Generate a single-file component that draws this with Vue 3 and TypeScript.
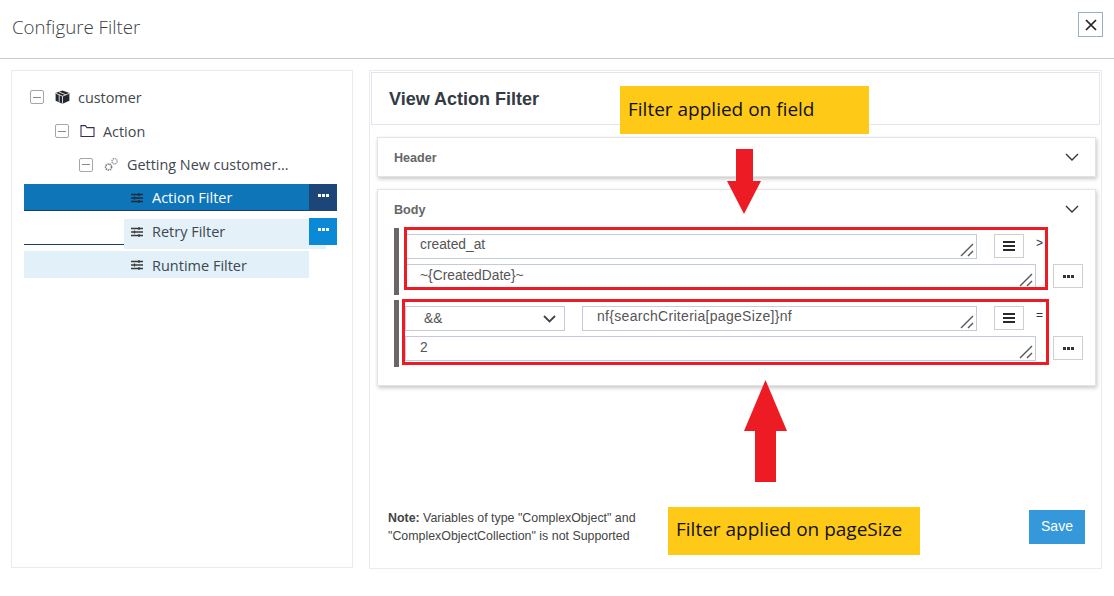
<template>
  <div class="modal">
    <header class="modal-head">
      <h1>Configure Filter</h1>
      <button class="close" type="button">
        <svg width="12" height="12" viewBox="0 0 12 12"><path d="M1 1l10 10M11 1 1 11" stroke="#222" stroke-width="1.7" fill="none" /></svg>
      </button>
    </header>

    <div class="modal-body">
      <aside class="tree">
        <div v-for="node in nodes" :key="node.label" class="tree-row" :class="`lvl-${node.level}`">
          <span class="toggle"><i /></span>
          <svg v-if="node.icon === 'cube'" class="ico" width="15" height="14" viewBox="0 0 15 14">
            <path d="M7.5.4 14.4 3v7.8l-6.9 3-6.9-3V3z" fill="#23282e" />
            <path d="M1 3.4 7.5 6.2 14 3.4M7.5 6.2v7.4M4.2 2l6.6 2.8M4.2 4.8v7" stroke="#fff" stroke-width=".8" fill="none" />
          </svg>
          <svg v-else-if="node.icon === 'folder'" class="ico" width="15" height="14" viewBox="0 0 15 14">
            <path d="M1 12.5V1.6h4.4l1.6 2h7v8.9z" fill="none" stroke="#3b2a5c" stroke-width="1.1" />
          </svg>
          <svg v-else class="ico" width="15" height="15" viewBox="0 0 15 15">
            <circle cx="4.6" cy="10" r="3" fill="none" stroke="#777" stroke-width="1.6" stroke-dasharray="1.4 .7" />
            <circle cx="10.6" cy="4.2" r="2.6" fill="none" stroke="#999" stroke-width="1.5" stroke-dasharray="1.3 .7" />
          </svg>
          <span>{{ node.label }}</span>
        </div>

        <div class="filter-row active">
          <div class="filter-label">
            <svg class="sliders" width="12" height="10" viewBox="0 0 12 10"><path d="M0 1.5h12M0 5h12M0 8.5h12M8 0v3M3.5 3.5v3M8 7v3" stroke="#1d2a38" stroke-width="1.3" fill="none" /></svg>
            Action Filter
          </div>
          <button class="more" type="button">
            <svg width="11" height="3" viewBox="0 0 11 3"><path d="M0 0h3v3H0zM4 0h3v3H4zM8 0h3v3H8z" fill="currentColor" /></svg>
          </button>
        </div>
        <div class="filter-row retry">
          <div class="filter-label">
            <span class="retry-bg" />
            <svg class="sliders" width="12" height="10" viewBox="0 0 12 10"><path d="M0 1.5h12M0 5h12M0 8.5h12M8 0v3M3.5 3.5v3M8 7v3" stroke="#3a3a3a" stroke-width="1.3" fill="none" /></svg>
            <span class="retry-text">Retry Filter</span>
          </div>
          <button class="more" type="button">
            <svg width="11" height="3" viewBox="0 0 11 3"><path d="M0 0h3v3H0zM4 0h3v3H4zM8 0h3v3H8z" fill="currentColor" /></svg>
          </button>
        </div>
        <div class="filter-row runtime">
          <div class="filter-label">
            <svg class="sliders" width="12" height="10" viewBox="0 0 12 10"><path d="M0 1.5h12M0 5h12M0 8.5h12M8 0v3M3.5 3.5v3M8 7v3" stroke="#3a3a3a" stroke-width="1.3" fill="none" /></svg>
            Runtime Filter
          </div>
        </div>
      </aside>

      <section class="detail">
        <h2>View Action Filter</h2>

        <div class="card card-head">
          <span class="card-title">Header</span>
          <svg class="chev" width="14" height="8" viewBox="0 0 14 8"><path d="M1 1l6 6 6-6" stroke="#333" stroke-width="1.4" fill="none" /></svg>
        </div>

        <div class="card card-body">
          <div class="card-line">
            <span class="card-title">Body</span>
            <svg class="chev" width="14" height="8" viewBox="0 0 14 8"><path d="M1 1l6 6 6-6" stroke="#333" stroke-width="1.4" fill="none" /></svg>
          </div>

          <div v-for="rule in rules" :key="rule.field" class="rule">
            <div class="rule-top">
              <div v-if="rule.joiner" class="select">
                {{ rule.joiner }}
                <svg width="13" height="8" viewBox="0 0 13 8"><path d="M1 1l5.5 5.5L12 1" stroke="#444" stroke-width="1.8" fill="none" /></svg>
              </div>
              <div class="field" :class="rule.joiner ? 'field-short' : 'field-full'">
                {{ rule.field }}
                <svg class="grip" width="14" height="14" viewBox="0 0 14 14"><path d="M1 13 13 1M8 13l5-5" stroke="#555" stroke-width="1.4" fill="none" /></svg>
              </div>
              <button class="square" type="button">
                <svg width="12" height="10" viewBox="0 0 12 10"><path d="M0 1h12M0 5h12M0 9h12" stroke="#2a2a2a" stroke-width="2" fill="none" /></svg>
              </button>
              <span class="op">{{ rule.op }}</span>
            </div>
            <div class="rule-bottom">
              <div class="field field-value">
                {{ rule.value }}
                <svg class="grip" width="14" height="14" viewBox="0 0 14 14"><path d="M1 13 13 1M8 13l5-5" stroke="#555" stroke-width="1.4" fill="none" /></svg>
              </div>
              <button class="square" type="button">
                <svg width="11" height="3" viewBox="0 0 11 3"><path d="M0 0h3v3H0zM4 0h3v3H4zM8 0h3v3H8z" fill="#333" /></svg>
              </button>
            </div>
          </div>
        </div>

        <footer class="detail-foot">
          <p><b>Note:</b> Variables of type "ComplexObject" and<br />"ComplexObjectCollection" is not Supported</p>
          <button class="save" type="button">Save</button>
        </footer>
      </section>
    </div>

    <!-- annotations pasted on top of the screenshot -->
    <div class="callout callout-top">Filter applied on field</div>
    <div class="callout callout-bottom">Filter applied on pageSize</div>
    <div class="redbox redbox-top" />
    <div class="redbox redbox-bottom" />
    <svg class="arrow arrow-down" width="34" height="65" viewBox="0 0 34 65"><path d="M9 0h17v32h8L17 65 0 32h9z" fill="#ed1c24" /></svg>
    <svg class="arrow arrow-up" width="43" height="102" viewBox="0 0 43 102"><path d="M21.5 0 43 51H32v51H11V51H0z" fill="#ed1c24" /></svg>
  </div>
</template>

<script setup lang="ts">
interface TreeNode {
  label: string
  level: number
  icon: 'cube' | 'folder' | 'gears'
}

interface Rule {
  joiner?: string
  field: string
  op: string
  value: string
}

const nodes: TreeNode[] = [
  { label: 'customer', level: 0, icon: 'cube' },
  { label: 'Action', level: 1, icon: 'folder' },
  { label: 'Getting New customer...', level: 2, icon: 'gears' },
]

const rules: Rule[] = [
  { field: 'created_at', op: '>', value: '~{CreatedDate}~' },
  { joiner: '&&', field: 'nf{searchCriteria[pageSize]}nf', op: '=', value: '2' },
]
</script>

<style>
html,
body {
  margin: 0;
  background: #fff;
}
</style>

<style scoped>
.modal {
  position: relative;
  width: 1114px;
  height: 596px;
  overflow: hidden;
  background: #fff;
  font-family: "Open Sans", "Noto Sans", sans-serif;
  color: #333;
}
button {
  font-family: inherit;
  cursor: pointer;
}
.modal-head {
  box-sizing: border-box;
  height: 59px;
  padding: 12px 11px 0 12px;
  display: flex;
  justify-content: space-between;
  align-items: flex-start;
  border-bottom: 1px solid #c8c9cb;
}
.modal-head h1 {
  margin: 0;
  font-size: 18.7px;
  line-height: 29px;
  font-weight: 300;
  color: #3a3f45;
}
.close {
  box-sizing: border-box;
  width: 25px;
  height: 25px;
  padding: 0;
  display: flex;
  align-items: center;
  justify-content: center;
  border: 1px solid #9fb0bd;
  background: #fff;
}
.modal-body {
  display: flex;
  padding: 11px 12px 0 11px;
  gap: 16px;
}
.tree {
  box-sizing: border-box;
  width: 342px;
  height: 498px;
  padding: 9px 15px 0 12px;
  border: 1px solid #e6ecf1;
}
.tree-row {
  height: 34px;
  display: flex;
  align-items: center;
  font-size: 14.4px;
  color: #3f4750;
}
.lvl-0 { padding-left: 6px; }
.lvl-1 { padding-left: 31px; }
.lvl-2 { padding-left: 55px; height: 33px; }
.toggle {
  box-sizing: border-box;
  width: 14px;
  height: 14px;
  margin-right: 11px;
  border: 1.5px solid #a6a6a6;
  border-radius: 2px;
  display: flex;
  align-items: center;
  justify-content: center;
}
.toggle i {
  width: 8px;
  height: 1px;
  background: #888;
}
.ico {
  margin-right: 8px;
  flex: none;
}
.filter-row {
  display: flex;
  height: 27px;
  font-size: 14.5px;
  color: #3f4750;
}
.filter-label {
  box-sizing: border-box;
  position: relative;
  width: 285px;
  height: 27px;
  padding: 1px 0 0 107px;
  display: flex;
  align-items: center;
  gap: 9px;
}
.sliders {
  position: relative;
  flex: none;
}
.more {
  width: 28px;
  height: 27px;
  padding: 0 0 4px;
  border: 0;
  color: #fff;
  display: flex;
  align-items: center;
  justify-content: center;
}
.active {
  margin-top: 3px;
}
.active .filter-label {
  background: #0f75b9;
  border-bottom: 1px solid #17406f;
  color: #fff;
}
.active .more {
  background: #1b4677;
}
.retry {
  margin-top: 7px;
}
.retry .filter-label {
  border-bottom: 1px solid #17406f;
}
.retry-bg {
  position: absolute;
  left: 100px;
  top: 1px;
  width: 202px;
  height: 30px;
  background: #e4f1f8;
}
.retry-text {
  position: relative;
}
.retry .more {
  position: relative;
  background: #0a8ad6;
}
.runtime {
  margin-top: 6px;
}
.runtime .filter-label {
  background: #e1f0f9;
}
.detail {
  box-sizing: border-box;
  width: 734px;
  height: 499px;
  padding: 1px;
  border: 1px solid #e6ecf1;
}
.detail h2 {
  box-sizing: border-box;
  margin: 0;
  height: 53px;
  padding-left: 17px;
  border: 1px solid #e3e5e8;
  font: bold 18px/53px "Liberation Sans", Arial, sans-serif;
  color: #333b45;
}
.card {
  box-sizing: border-box;
  width: 719px;
  margin-left: 6px;
  background: #fff;
  border: 1px solid #e4e4e4;
  box-shadow: 1px 2px 4px rgba(0, 0, 0, 0.22);
}
.card-head {
  height: 40px;
  margin-top: 12px;
  padding: 0 16px;
  display: flex;
  align-items: center;
  justify-content: space-between;
}
.card-title {
  padding-top: 2px;
  font: bold 12.6px "Liberation Sans", Arial, sans-serif;
  color: #666;
}
.card-body {
  height: 197px;
  margin-top: 12px;
  padding: 0 0 0 16px;
}
.card-line {
  height: 38px;
  padding: 0 16px 0 0;
  display: flex;
  align-items: center;
  justify-content: space-between;
}
.rule {
  box-sizing: border-box;
  width: 690px;
  height: 67px;
  margin-bottom: 5px;
  padding: 6px 0 0 6px;
  border-left: 5px solid #6a6566;
  font: 13.8px "Liberation Sans", Arial, sans-serif;
  color: #555;
}
.rule-top,
.rule-bottom {
  display: flex;
  height: 25px;
}
.rule-bottom {
  margin-top: 5px;
}
.field,
.select {
  box-sizing: border-box;
  position: relative;
  height: 25px;
  border: 1px solid #c3cbdb;
  line-height: 19px;
  background: #fff;
}
.field {
  padding-left: 14px;
}
.field-full {
  width: 572px;
}
.select {
  width: 160px;
  margin-right: 17px;
  padding: 0 8px 0 18px;
  display: flex;
  align-items: center;
  justify-content: space-between;
}
.field-short {
  width: 395px;
  font-size: 14px;
  letter-spacing: 0.3px;
}
.field-value {
  width: 631px;
  line-height: 21px;
}
.grip {
  position: absolute;
  right: 2px;
  bottom: 1px;
}
.square {
  box-sizing: border-box;
  width: 30px;
  height: 24px;
  margin-left: 17px;
  padding: 0;
  display: flex;
  align-items: center;
  justify-content: center;
  background: #fff;
  border: 1px solid #cfcfcf;
}
.op {
  margin-left: 12px;
  font-size: 12px;
  line-height: 18px;
  color: #333;
}
.detail-foot {
  display: flex;
  align-items: center;
  justify-content: space-between;
  margin-top: 123px;
  padding: 0 15px 0 17px;
}
.detail-foot p {
  margin: 0;
  font: 12.4px/18px "Liberation Sans", Arial, sans-serif;
  color: #444;
}
.save {
  width: 56px;
  height: 34px;
  padding: 0 0 2px;
  border: 0;
  background: #3498db;
  color: #fff;
  font: 14px "Liberation Sans", Arial, sans-serif;
}
.callout {
  position: absolute;
  box-sizing: border-box;
  height: 48px;
  padding-left: 8px;
  background: #ffc917;
  color: #111;
  font: 19px/46px "Open Sans", sans-serif;
}
.callout-top {
  left: 620px;
  top: 86px;
  width: 249px;
}
.callout-bottom {
  left: 668px;
  top: 507px;
  width: 252px;
  line-height: 44px;
}
.redbox {
  position: absolute;
  box-sizing: border-box;
  border: 3px solid #ed1c24;
}
.redbox-top {
  left: 404px;
  top: 227px;
  width: 644px;
  height: 63px;
}
.redbox-bottom {
  left: 402px;
  top: 299px;
  width: 647px;
  height: 66px;
}
.arrow {
  position: absolute;
}
.arrow-down {
  left: 727px;
  top: 149px;
}
.arrow-up {
  left: 744px;
  top: 380px;
}
</style>
